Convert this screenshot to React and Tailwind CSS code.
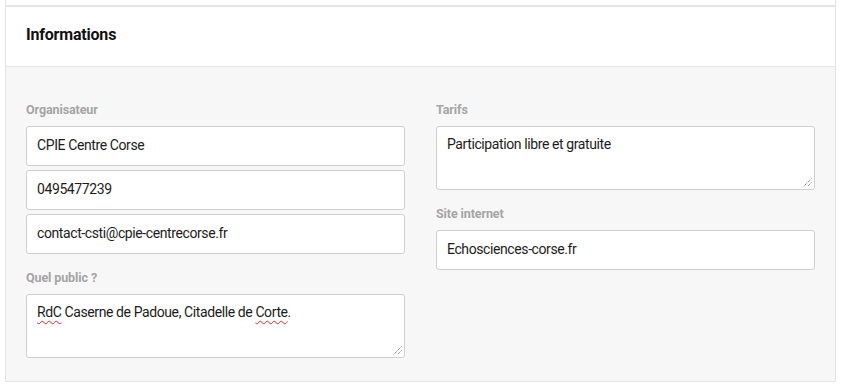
import React from "react";

const font = { fontFamily: "Roboto, 'Liberation Sans', sans-serif" };

function Label({ children }) {
  return (
    <div className="text-[12.5px] leading-[16px] font-bold text-[#a5a5a5] mb-[8px] tracking-[-0.1px]">
      {children}
    </div>
  );
}

function Input({ children }) {
  return (
    <div className="h-[40px] bg-white border border-[#cfcfcf] rounded-[3px] px-[10px] flex items-center text-[14px] leading-[20px] text-[#1c1c1c] tracking-[-0.4px]">
      <span className="-mt-[2px]">{children}</span>
    </div>
  );
}

function Grip() {
  return (
    <svg
      className="absolute right-[2px] bottom-[2px]"
      width="10"
      height="10"
      viewBox="0 0 10 10"
    >
      <line x1="9.5" y1="1.5" x2="1.5" y2="9.5" stroke="#6b6b6b" strokeWidth="1" strokeDasharray="1 1" />
      <line x1="9.5" y1="5.5" x2="5.5" y2="9.5" stroke="#6b6b6b" strokeWidth="1" strokeDasharray="1 1" />
    </svg>
  );
}

function TextArea({ children }) {
  return (
    <div className="relative h-[64px] bg-white border border-[#cfcfcf] rounded-[3px] px-[10px] pt-[7px] text-[14px] leading-[20px] text-[#1c1c1c] tracking-[-0.4px]">
      {children}
      <Grip />
    </div>
  );
}

const Spell = ({ children }) => (
  <span className="underline decoration-wavy decoration-[#e0261b] decoration-1 underline-offset-[3px]">
    {children}
  </span>
);

export default function App() {
  return (
    <div className="w-[842px] h-[388px] bg-white" style={font}>
      <div className="ml-[5px] mr-[6px] h-[6px] border-x border-b border-[#e4e4e4]" />
      <div className="ml-[5px] mr-[6px] border border-[#e4e4e4]">
        <div className="h-[60px] bg-white border-b border-[#e4e4e4] flex items-center px-[20px]">
          <h2 className="text-[16px] leading-[20px] font-bold text-[#111] -mt-[4px] tracking-[-0.2px]">Informations</h2>
        </div>
        <div className="bg-[#f7f7f7] px-[20px] pt-[35px] pb-[23px] grid grid-cols-2 gap-x-[31px]">
          <div>
            <Label>Organisateur</Label>
            <div className="flex flex-col gap-[4px]">
              <Input>CPIE Centre Corse</Input>
              <Input>0495477239</Input>
              <Input>contact-csti@cpie-centrecorse.fr</Input>
            </div>
            <div className="mt-[16px]">
              <Label>Quel public ?</Label>
              <TextArea>
                <Spell>RdC</Spell> Caserne de Padoue, Citadelle de <Spell>Corte</Spell>.
              </TextArea>
            </div>
          </div>
          <div>
            <Label>Tarifs</Label>
            <TextArea>Participation libre et gratuite</TextArea>
            <div className="mt-[16px]">
              <Label>Site internet</Label>
              <Input>Echosciences-corse.fr</Input>
            </div>
          </div>
        </div>
      </div>
    </div>
  );
}
